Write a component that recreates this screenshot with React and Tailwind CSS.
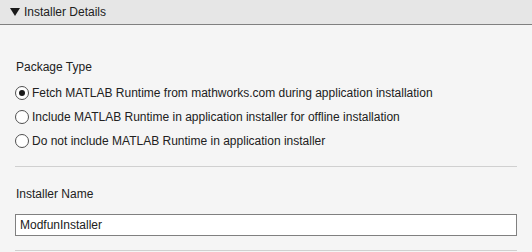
import React, {useState} from "react";

const options = [
    "Fetch MATLAB Runtime from mathworks.com during application installation",
    "Include MATLAB Runtime in application installer for offline installation",
    "Do not include MATLAB Runtime in application installer",
];

function Radio({checked}) {
    return (
        <span className="w-[14px] h-[14px] rounded-full border border-[#505050] bg-white flex items-center justify-center shrink-0">
            {checked && <span className="w-[6px] h-[6px] rounded-full bg-[#1a1a1a]"/>}
        </span>
    );
}

export default function App() {
    const [selected, setSelected] = useState(0);
    const [name, setName] = useState("ModfunInstaller");

    return (
        <div
            className="w-[532px] h-[252px] overflow-hidden bg-[#f5f5f5] text-[12px] text-[#212121]"
            style={{fontFamily: '"Liberation Sans", Arial, sans-serif'}}
        >
            <div className="h-[25px] bg-[#e6e6e6] border-b border-[#808080] flex items-center pl-[10px]">
                <svg width="10" height="8" viewBox="0 0 10 8" className="mr-[4px]">
                    <polygon points="0,0 10,0 5,8" fill="#1a1a1a"/>
                </svg>
                <span>Installer Details</span>
            </div>

            <div className="px-[15px] pt-[30px]">
                <div className="h-[24px] flex items-center pl-px">Package Type</div>

                <div className="mt-[2px]">
                    {options.map((label, i) => (
                        <div
                            key={i}
                            className="h-[24px] flex items-center gap-[3px] cursor-default"
                            onClick={() => setSelected(i)}
                        >
                            <Radio checked={selected === i}/>
                            <span>{label}</span>
                        </div>
                    ))}
                </div>

                <div className="mt-[13px] h-px bg-[#d0d0d0]"/>

                <div className="mt-[15px] h-[24px] flex items-center pl-px">Installer Name</div>

                <input
                    value={name}
                    onChange={e => setName(e.target.value)}
                    className="mt-[8px] w-full h-[22px] bg-white border border-[#808080] px-[4px] text-[12px] text-[#212121] outline-none"
                    style={{fontFamily: '"Liberation Sans", Arial, sans-serif'}}
                />

                <div className="mt-[14px] h-px bg-[#d0d0d0]"/>
            </div>
        </div>
    );
}
